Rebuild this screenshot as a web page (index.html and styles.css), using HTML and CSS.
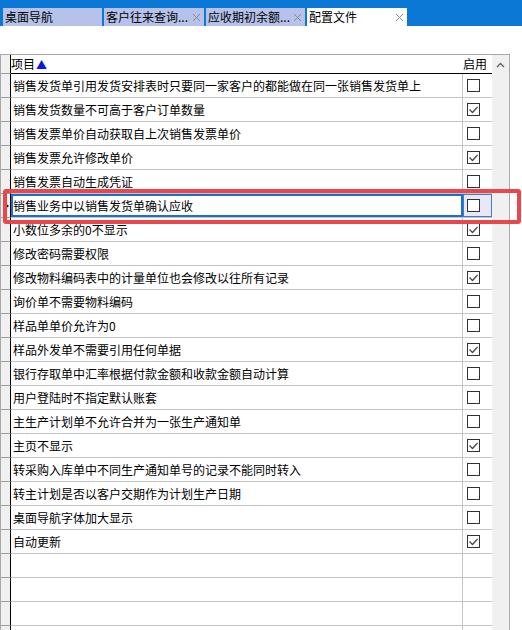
FILE: index.html
```html
<!DOCTYPE html>
<html lang="zh-CN">
<head>
  <meta charset="UTF-8">
  <title>配置文件</title>
  <link rel="stylesheet" href="styles.css">
</head>
<body>

  <div class="tabbar">
    <div class="tab">桌面导航</div>
    <div class="tab wide">客户往来查询...<svg class="close" width="9" height="9" viewBox="0 0 9 9"><path d="M1 1L8 8M8 1L1 8"/></svg></div>
    <div class="tab">应收期初余额...<svg class="close" width="9" height="9" viewBox="0 0 9 9"><path d="M1 1L8 8M8 1L1 8"/></svg></div>
    <div class="tab active wide">配置文件<svg class="close" width="9" height="9" viewBox="0 0 9 9"><path d="M1 1L8 8M8 1L1 8"/></svg></div>
  </div>

  <div class="grid">
    <div class="table" id="table">
      <div class="row head">
        <div class="rh"></div>
        <div class="name">项目<span class="sort">▲</span></div>
        <div class="chk">启用</div>
      </div>
    </div>
    <div class="scrollbar">
      <svg width="9" height="6" viewBox="0 0 9 6"><path d="M1 5L4.5 1.5L8 5"/></svg>
    </div>
    <div class="highlight"></div>
  </div>

  <script>
    const items = [
      ['销售发货单引用发货安排表时只要同一家客户的都能做在同一张销售发货单上', 0],
      ['销售发货数量不可高于客户订单数量', 1],
      ['销售发票单价自动获取自上次销售发票单价', 0],
      ['销售发票允许修改单价', 1],
      ['销售发票自动生成凭证', 0],
      ['销售业务中以销售发货单确认应收', 0],
      ['小数位多余的0不显示', 1],
      ['修改密码需要权限', 0],
      ['修改物料编码表中的计量单位也会修改以往所有记录', 1],
      ['询价单不需要物料编码', 0],
      ['样品单单价允许为0', 0],
      ['样品外发单不需要引用任何单据', 1],
      ['银行存取单中汇率根据付款金额和收款金额自动计算', 0],
      ['用户登陆时不指定默认账套', 0],
      ['主生产计划单不允许合并为一张生产通知单', 0],
      ['主页不显示', 1],
      ['转采购入库单中不同生产通知单号的记录不能同时转入', 0],
      ['转主计划是否以客户交期作为计划生产日期', 0],
      ['桌面导航字体加大显示', 0],
      ['自动更新', 1]
    ];
    const selected = 5;
    const table = document.getElementById('table');
    const tick = '<svg width="11" height="11" viewBox="0 0 11 11"><path d="M1.5 5.5L4.5 8.5L9.5 3"/></svg>';

    items.forEach((item, i) => {
      const row = document.createElement('div');
      row.className = 'row' + (i === selected ? ' selected' : '');
      row.innerHTML =
        '<div class="rh">' + (i === selected ? '<span class="pointer"></span>' : '') + '</div>' +
        '<div class="name">' + item[0] + '</div>' +
        '<div class="chk"><span class="box">' + (item[1] ? tick : '') + '</span></div>';
      table.appendChild(row);
    });

    // empty rows to fill the grid
    for (let i = 0; i < 4; i++) {
      const row = document.createElement('div');
      row.className = 'row';
      row.innerHTML = '<div class="rh"></div><div class="name"></div><div class="chk"></div>';
      table.appendChild(row);
    }
  </script>
</body>
</html>
```

FILE: styles.css
```css
* {
  margin: 0;
  padding: 0;
  box-sizing: border-box;
}

body {
  font-family: "Noto Sans CJK SC", "Liberation Sans", sans-serif;
  font-size: 12px;
  color: #000;
  background: #fff;
  height: 630px;
  overflow: hidden;
}

/* Tabs */
.tabbar {
  height: 26px;
  background: #0a78d4;
  padding: 8px 0 0 3px;
  display: flex;
  gap: 2px;
}

.tab {
  width: 99px;
  height: 18px;
  background: #b6c2ea;
  padding-left: 2px;
  line-height: 18px;
  font-size: 12px;
  display: flex;
  align-items: center;
  justify-content: space-between;
  white-space: nowrap;
}

.tab.wide {
  width: 100px;
}

.tab.active {
  background: #fff;
}

.close {
  margin-right: 3px;
  fill: none;
  stroke: #8a8a8a;
  stroke-width: 1;
}

/* Grid */
.grid {
  position: relative;
  margin-top: 28px;
  width: 510px;
  border: 1px solid #a8a8a8;
  border-bottom: none;
  display: flex;
}

.table {
  width: 491px;
}

.row {
  display: flex;
  height: 24px;
  border-bottom: 1px solid #c4c4c4;
}

.row.head {
  height: 19px;
  border-bottom: 1px solid #000;
}

.rh {
  width: 10px;
  background: #f0f0f0;
  border-right: 1px solid #000;
  border-bottom: 1px solid #a0a0a0;
  margin-bottom: -1px;
  position: relative;
}

.name {
  width: 452px;
  border-right: 1px solid #c4c4c4;
  padding-left: 2px;
  line-height: 23px;
  white-space: nowrap;
  overflow: hidden;
}

.chk {
  width: 29px;
  display: flex;
  align-items: center;
  padding-left: 4px;
}

.head .name {
  border-right: none;
  padding-left: 0;
  line-height: 18px;
  overflow: visible;
}

.head .chk {
  padding-left: 0;
  line-height: 18px;
  white-space: nowrap;
}

.sort {
  color: #0a16e8;
  font-size: 11px;
  margin-left: 1px;
}

.box {
  width: 13px;
  height: 13px;
  border: 1px solid #333;
  background: #fff;
  display: flex;
  align-items: center;
  justify-content: center;
}

.box svg {
  fill: none;
  stroke: #4a4a4a;
  stroke-width: 1.3;
}

/* Selected row */
.selected .name {
  border: 2px solid #1a6fd0;
  padding-left: 0;
  line-height: 19px;
}

.selected .chk {
  background: #e8e8f6;
  border: 1px solid #3a7fd6;
  padding-left: 3px;
}

.pointer {
  position: absolute;
  left: 3px;
  top: 8px;
  border-left: 5px solid #000;
  border-top: 4px solid transparent;
  border-bottom: 4px solid transparent;
}

.highlight {
  position: absolute;
  left: 2px;
  top: 134px;
  width: 518px;
  height: 35px;
  border: 4px solid #e8484c;
  border-radius: 3px;
}

/* Scrollbar */
.scrollbar {
  width: 17px;
  background: #f0f0f0;
  display: flex;
  justify-content: center;
  padding-top: 7px;
}

.scrollbar svg {
  fill: none;
  stroke: #606060;
  stroke-width: 1.3;
}
```
